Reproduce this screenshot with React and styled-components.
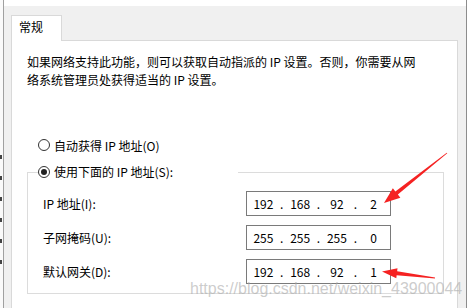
import styled, { createGlobalStyle } from "styled-components";

const GlobalStyle = createGlobalStyle`
	body {
		margin: 0;
		background: #ffffff;
		font-family: "Noto Sans CJK SC", "Microsoft YaHei", sans-serif;
		font-size: 12px;
		color: #000000;
	}
`;

const fields = [
	{ label: "IP 地址(I):", value: ["192", "168", "92", "2"] },
	{ label: "子网掩码(U):", value: ["255", "255", "255", "0"] },
	{ label: "默认网关(D):", value: ["192", "168", "92", "1"] },
];

function Radio({ checked, children }) {
	return (
		<>
			<Circle>{checked && <Dot />}</Circle>
			<span>{children}</span>
		</>
	);
}

function IpBox({ parts }) {
	return (
		<IpField>
			{parts.map((part, index) => (
				<IpPart key={index}>
					<Segment>{part}</Segment>
					{index < 3 && <Separator>.</Separator>}
				</IpPart>
			))}
		</IpField>
	);
}

export default function App() {
	return (
		<Window>
			<GlobalStyle />
			<LeftEdge>
				{[157, 185, 208, 227, 247, 268].map((y) => (
					<Mark key={y} />
				))}
			</LeftEdge>

			<Main>
				<TopStrip />
				<Body>
					<TabRow>
						<Tab>常规</Tab>
					</TabRow>
					<Panel>
						<Intro>
							如果网络支持此功能，则可以获取自动指派的 IP 设置。否则，你需要从网
							<br />
							络系统管理员处获得适当的 IP 设置。
						</Intro>

						<RadioRow>
							<Radio>自动获得 IP 地址(O)</Radio>
						</RadioRow>

						<Group>
							<Legend>
								<Radio checked>使用下面的 IP 地址(S):</Radio>
							</Legend>
							<Fields>
								{fields.map((field) => (
									<Field key={field.label}>
										<FieldLabel>{field.label}</FieldLabel>
										<IpBox parts={field.value} />
									</Field>
								))}
							</Fields>
						</Group>
					</Panel>
				</Body>
			</Main>

			<RightEdge />

			<Arrows viewBox="0 0 471 308">
				<polygon points="384,203 400.35,197.72 397.85,194.57 447.25,153.3 446.75,152.7 395.35,191.43 392.85,188.28" />
				<polygon points="382,271.5 396.3,278.26 396.66,275.28 434.95,278.4 435.05,277.6 397.14,271.32 397.5,268.34" />
			</Arrows>
			<Watermark>https://blog.csdn.net/weixin_43900044</Watermark>
		</Window>
	);
}

// UI
const Window = styled.div`
	position: relative;
	display: flex;
	width: 471px;
	height: 308px;
	overflow: hidden;
`;

const LeftEdge = styled.div`
	width: 3px;
	background: #fafafa;
	border-right: 1px solid #a0a0a0;
	display: flex;
	flex-direction: column;
	align-items: flex-start;
	padding-top: 155px;
	gap: 17px;
	box-sizing: content-box;
`;

const Mark = styled.div`
	width: 2px;
	height: 4px;
	background: #444444;
`;

const Main = styled.div`
	flex: 1;
	display: flex;
	flex-direction: column;
`;

const TopStrip = styled.div`
	height: 6px;
	background: #ffffff;
`;

const Body = styled.div`
	flex: 1;
	display: flex;
	flex-direction: column;
	background: #f0f0f0;
	padding: 9px 8px 0 7px;
`;

const TabRow = styled.div`
	display: flex;
`;

const Tab = styled.div`
	position: relative;
	z-index: 1;
	box-sizing: border-box;
	width: 51px;
	height: 26px;
	margin-bottom: -1px;
	padding-left: 7px;
	line-height: 22px;
	background: #ffffff;
	border: 1px solid #d9d9d9;
	border-bottom: none;
`;

const Panel = styled.div`
	flex: 1;
	background: #ffffff;
	border: 1px solid #d9d9d9;
	border-bottom: none;
	padding: 12px 0 0 15px;
`;

const Intro = styled.p`
	margin: 0;
	line-height: 18px;
	white-space: nowrap;
`;

const RadioRow = styled.div`
	display: flex;
	align-items: center;
	gap: 4px;
	height: 18px;
	margin-top: 47px;
	padding-left: 11px;
`;

const Circle = styled.span`
	box-sizing: border-box;
	width: 12px;
	height: 12px;
	border: 1px solid #333333;
	border-radius: 50%;
	background: #ffffff;
	display: flex;
	align-items: center;
	justify-content: center;
`;

const Dot = styled.span`
	width: 6px;
	height: 6px;
	border-radius: 50%;
	background: #222222;
`;

const Group = styled.fieldset`
	box-sizing: border-box;
	width: 417px;
	margin: 9px 0 0;
	padding: 0 0 9px 10px;
	border: 1px solid #dcdcdc;
`;

const Legend = styled.legend`
	display: flex;
	align-items: center;
	gap: 4px;
	width: 200px;
	height: 18px;
	padding: 0;
	line-height: 18px;
`;

const Fields = styled.div`
	display: grid;
	row-gap: 9px;
	margin: 10px 0 0 5px;
`;

const Field = styled.div`
	display: grid;
	grid-template-columns: 203px 145px;
	align-items: center;
`;

const FieldLabel = styled.span`
	line-height: 18px;
`;

const IpField = styled.div`
	box-sizing: border-box;
	height: 25px;
	display: flex;
	align-items: center;
	border: 1px solid #7a7a7a;
	background: #ffffff;
`;

const IpPart = styled.div`
	flex: 1;
	display: flex;
	align-items: center;
	&:last-child {
		flex: 0.89;
	}
`;

const Segment = styled.span`
	flex: 1;
	text-align: center;
`;

const Separator = styled.span`
	width: 4px;
	text-align: center;
`;

const RightEdge = styled.div`
	width: 4px;
	background: #ffffff;
	border-left: 1px solid #8c8c8c;
`;

const Arrows = styled.svg`
	position: absolute;
	left: 0;
	top: 0;
	width: 471px;
	height: 308px;
	pointer-events: none;
	fill: #f52222;
`;

const Watermark = styled.div`
	position: absolute;
	left: 190px;
	top: 280px;
	font-family: "Liberation Sans", Arial, sans-serif;
	font-size: 16px;
	line-height: 18px;
	white-space: nowrap;
	color: rgba(170, 170, 170, 0.6);
	pointer-events: none;
`;
